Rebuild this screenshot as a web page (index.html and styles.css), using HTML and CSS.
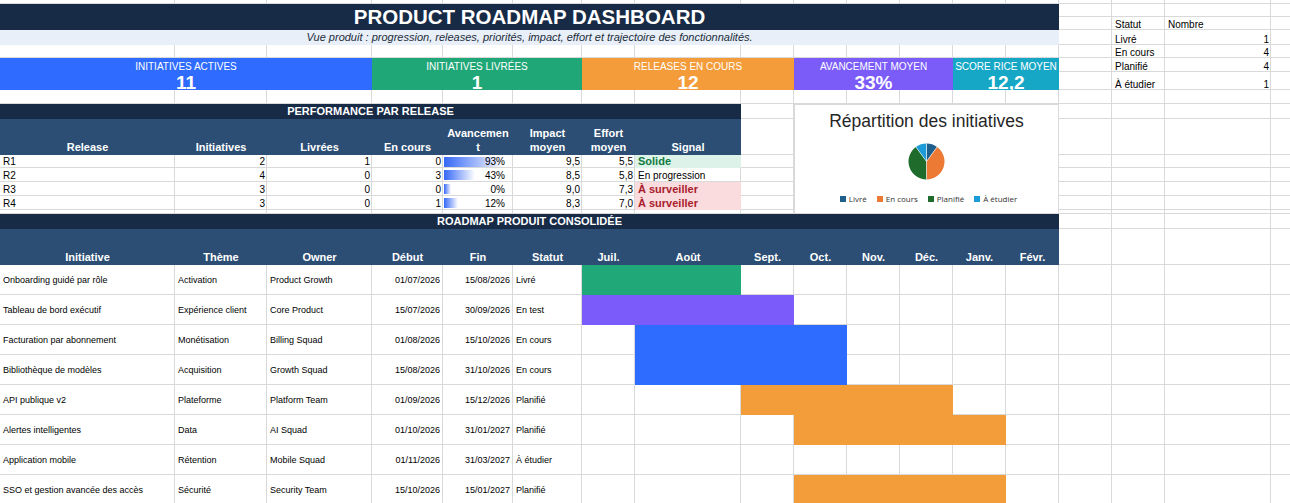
FILE: index.html
```html
<!DOCTYPE html>
<html lang="fr">
<head>
<meta charset="utf-8">
<title>Product Roadmap Dashboard</title>
<link rel="stylesheet" href="styles.css">
</head>
<body>
<main class="sheet">
  <h1 class="title">PRODUCT ROADMAP DASHBOARD</h1>
  <p class="subtitle">Vue produit : progression, releases, priorités, impact, effort et trajectoire des fonctionnalités.</p>

  <section class="kpis">
    <div class="kpi kpi-blue"><span class="kpi-label">INITIATIVES ACTIVES</span><span class="kpi-value">11</span></div>
    <div class="kpi kpi-green"><span class="kpi-label">INITIATIVES LIVRÉES</span><span class="kpi-value">1</span></div>
    <div class="kpi kpi-orange"><span class="kpi-label">RELEASES EN COURS</span><span class="kpi-value">12</span></div>
    <div class="kpi kpi-purple"><span class="kpi-label">AVANCEMENT MOYEN</span><span class="kpi-value">33%</span></div>
    <div class="kpi kpi-teal"><span class="kpi-label">SCORE RICE MOYEN</span><span class="kpi-value">12,2</span></div>
  </section>

  <section class="stats">
    <div class="cell">Statut</div><div class="cell">Nombre</div>
    <div class="cell">Livré</div><div class="cell num">1</div>
    <div class="cell">En cours</div><div class="cell num">4</div>
    <div class="cell">Planifié</div><div class="cell num">4</div>
    <div class="cell">À étudier</div><div class="cell num">1</div>
  </section>

  <section class="perf">
    <div class="band">PERFORMANCE PAR RELEASE</div>
    <div class="head">Release</div>
    <div class="head">Initiatives</div>
    <div class="head">Livrées</div>
    <div class="head">En cours</div>
    <div class="head">Avancemen<br>t</div>
    <div class="head">Impact<br>moyen</div>
    <div class="head">Effort<br>moyen</div>
    <div class="head">Signal</div>

    <div class="cell">R1</div><div class="cell num">2</div><div class="cell num">1</div><div class="cell num">0</div>
    <div class="progress"><span class="databar" style="width:60px"></span><span class="pct">93%</span></div>
    <div class="cell num">9,5</div><div class="cell num">5,5</div>
    <div class="cell signal sig-good">Solide</div>

    <div class="cell">R2</div><div class="cell num">4</div><div class="cell num">0</div><div class="cell num">3</div>
    <div class="progress"><span class="databar" style="width:31px"></span><span class="pct">43%</span></div>
    <div class="cell num">8,5</div><div class="cell num">5,8</div>
    <div class="cell signal">En progression</div>

    <div class="cell">R3</div><div class="cell num">3</div><div class="cell num">0</div><div class="cell num">0</div>
    <div class="progress"><span class="databar" style="width:7px"></span><span class="pct">0%</span></div>
    <div class="cell num">9,0</div><div class="cell num">7,3</div>
    <div class="cell signal sig-bad">À surveiller</div>

    <div class="cell">R4</div><div class="cell num">3</div><div class="cell num">0</div><div class="cell num">1</div>
    <div class="progress"><span class="databar" style="width:14px"></span><span class="pct">12%</span></div>
    <div class="cell num">8,3</div><div class="cell num">7,0</div>
    <div class="cell signal sig-bad">À surveiller</div>
  </section>

  <figure class="chart">
    <figcaption class="chart-title">Répartition des initiatives</figcaption>
    <svg class="pie" width="37" height="37" viewBox="0 0 37 37">
      <path d="M18.5 18.5 L18.5 0.5 A18 18 0 0 1 29.08 3.94 Z" fill="#1f5f8c"/>
      <path d="M18.5 18.5 L29.08 3.94 A18 18 0 0 1 18.5 36.5 Z" fill="#ec7a34"/>
      <path d="M18.5 18.5 L18.5 36.5 A18 18 0 0 1 7.92 3.94 Z" fill="#1e6b2c"/>
      <path d="M18.5 18.5 L7.92 3.94 A18 18 0 0 1 18.5 0.5 Z" fill="#1b9bd7"/>
      <g stroke="#fff" stroke-width="0.6" fill="none">
        <path d="M18.5 18.5 L18.5 0.5 M18.5 18.5 L29.08 3.94 M18.5 18.5 L18.5 36.5 M18.5 18.5 L7.92 3.94"/>
      </g>
    </svg>
    <ul class="legend">
      <li><span class="swatch sw-livre"></span>Livré</li>
      <li><span class="swatch sw-cours"></span>En cours</li>
      <li><span class="swatch sw-plan"></span>Planifié</li>
      <li><span class="swatch sw-etude"></span>À étudier</li>
    </ul>
  </figure>

  <section class="roadmap">
    <div class="band">ROADMAP PRODUIT CONSOLIDÉE</div>
    <div class="head">Initiative</div>
    <div class="head">Thème</div>
    <div class="head">Owner</div>
    <div class="head">Début</div>
    <div class="head">Fin</div>
    <div class="head">Statut</div>
    <div class="head">Juil.</div>
    <div class="head">Août</div>
    <div class="head">Sept.</div>
    <div class="head">Oct.</div>
    <div class="head">Nov.</div>
    <div class="head">Déc.</div>
    <div class="head">Janv.</div>
    <div class="head">Févr.</div>

    <div class="task">Onboarding guidé par rôle</div><div class="task">Activation</div><div class="task">Product Growth</div>
    <div class="task date">01/07/2026</div><div class="task date">15/08/2026</div><div class="task">Livré</div>
    <div class="bar bar-green span-2"></div><div></div><div></div><div></div><div></div><div></div><div></div>

    <div class="task">Tableau de bord exécutif</div><div class="task">Expérience client</div><div class="task">Core Product</div>
    <div class="task date">15/07/2026</div><div class="task date">30/09/2026</div><div class="task">En test</div>
    <div class="bar bar-purple span-3"></div><div></div><div></div><div></div><div></div><div></div>

    <div class="task">Facturation par abonnement</div><div class="task">Monétisation</div><div class="task">Billing Squad</div>
    <div class="task date">01/08/2026</div><div class="task date">15/10/2026</div><div class="task">En cours</div>
    <div></div><div class="bar bar-blue span-3"></div><div></div><div></div><div></div><div></div>

    <div class="task">Bibliothèque de modèles</div><div class="task">Acquisition</div><div class="task">Growth Squad</div>
    <div class="task date">15/08/2026</div><div class="task date">31/10/2026</div><div class="task">En cours</div>
    <div></div><div class="bar bar-blue span-3"></div><div></div><div></div><div></div><div></div>

    <div class="task">API publique v2</div><div class="task">Plateforme</div><div class="task">Platform Team</div>
    <div class="task date">01/09/2026</div><div class="task date">15/12/2026</div><div class="task">Planifié</div>
    <div></div><div></div><div class="bar bar-orange span-4"></div><div></div><div></div>

    <div class="task">Alertes intelligentes</div><div class="task">Data</div><div class="task">AI Squad</div>
    <div class="task date">01/10/2026</div><div class="task date">31/01/2027</div><div class="task">Planifié</div>
    <div></div><div></div><div></div><div class="bar bar-orange span-4"></div><div></div>

    <div class="task">Application mobile</div><div class="task">Rétention</div><div class="task">Mobile Squad</div>
    <div class="task date">01/11/2026</div><div class="task date">31/03/2027</div><div class="task">À étudier</div>
    <div></div><div></div><div></div><div></div><div></div><div></div><div></div><div></div>

    <div class="task">SSO et gestion avancée des accès</div><div class="task">Sécurité</div><div class="task">Security Team</div>
    <div class="task date">15/10/2026</div><div class="task date">15/01/2027</div><div class="task">Planifié</div>
    <div></div><div></div><div></div><div class="bar bar-orange span-4"></div><div></div>
  </section>
</main>
</body>
</html>
```

FILE: styles.css
```css
* {
  box-sizing: border-box;
  margin: 0;
  padding: 0;
}

html,
body {
  width: 1290px;
  height: 503px;
  overflow: hidden;
  background: #ffffff;
}

body {
  font-family: "Liberation Sans", Arial, sans-serif;
  color: #000000;
}

/* ---------- Spreadsheet canvas with gridlines ---------- */
.sheet {
  display: grid;
  width: 1290px;
  grid-template-columns: 175px 92px 105px 71px 70px 69px 53px 106px 53px 53px 53px 53px 53px 53px 53px 53px 106px 19px;
  grid-template-rows: 4px 13px 13px 15px 13px 14px 18px 14px 15px 36px 13px 14px 14px 14px 4px 15px 36px repeat(8, 30px);
  background-image:
    linear-gradient(to right,
      transparent 0 174px, #d9d9d9 174px 175px,
      transparent 175px 266px, #d9d9d9 266px 267px,
      transparent 267px 371px, #d9d9d9 371px 372px,
      transparent 372px 442px, #d9d9d9 442px 443px,
      transparent 443px 512px, #d9d9d9 512px 513px,
      transparent 513px 581px, #d9d9d9 581px 582px,
      transparent 582px 634px, #d9d9d9 634px 635px,
      transparent 635px 740px, #d9d9d9 740px 741px,
      transparent 741px 793px, #d9d9d9 793px 794px,
      transparent 794px 846px, #d9d9d9 846px 847px,
      transparent 847px 899px, #d9d9d9 899px 900px,
      transparent 900px 952px, #d9d9d9 952px 953px,
      transparent 953px 1005px, #d9d9d9 1005px 1006px,
      transparent 1006px 1058px, #d9d9d9 1058px 1059px,
      transparent 1059px 1111px, #d9d9d9 1111px 1112px,
      transparent 1112px 1164px, #d9d9d9 1164px 1165px,
      transparent 1165px 1270px, #d9d9d9 1270px 1271px,
      transparent 1271px),
    linear-gradient(to bottom,
      transparent 0 3px, #d9d9d9 3px 4px,
      transparent 4px 16px, #d9d9d9 16px 17px,
      transparent 17px 29px, #d9d9d9 29px 30px,
      transparent 30px 44px, #d9d9d9 44px 45px,
      transparent 45px 57px, #d9d9d9 57px 58px,
      transparent 58px 71px, #d9d9d9 71px 72px,
      transparent 72px 89px, #d9d9d9 89px 90px,
      transparent 90px 103px, #d9d9d9 103px 104px,
      transparent 104px 118px, #d9d9d9 118px 119px,
      transparent 119px 154px, #d9d9d9 154px 155px,
      transparent 155px 167px, #d9d9d9 167px 168px,
      transparent 168px 181px, #d9d9d9 181px 182px,
      transparent 182px 195px, #d9d9d9 195px 196px,
      transparent 196px 209px, #d9d9d9 209px 210px,
      transparent 210px 213px, #d9d9d9 213px 214px,
      transparent 214px 228px, #d9d9d9 228px 229px,
      transparent 229px 264px, #d9d9d9 264px 265px,
      transparent 265px 294px, #d9d9d9 294px 295px,
      transparent 295px 324px, #d9d9d9 324px 325px,
      transparent 325px 354px, #d9d9d9 354px 355px,
      transparent 355px 384px, #d9d9d9 384px 385px,
      transparent 385px 414px, #d9d9d9 414px 415px,
      transparent 415px 444px, #d9d9d9 444px 445px,
      transparent 445px 474px, #d9d9d9 474px 475px,
      transparent 475px 504px, #d9d9d9 504px 505px,
      transparent 505px);
}

/* ---------- Title ---------- */
.title {
  grid-column: 1 / 15;
  grid-row: 2 / 4;
  background: #172a46;
  color: #ffffff;
  font-size: 20.5px;
  font-weight: 700;
  line-height: 26px;
  text-align: center;
}

.subtitle {
  grid-column: 1 / 15;
  grid-row: 4;
  background: #e8eff8;
  color: #222c3a;
  font-size: 11px;
  font-style: italic;
  line-height: 15px;
  text-align: center;
  white-space: nowrap;
}

/* ---------- KPI band ---------- */
.kpis {
  grid-column: 1 / 15;
  grid-row: 6 / 8;
  display: grid;
  grid-template-columns: 372px 210px 212px 159px 106px;
}

.kpi {
  display: flex;
  flex-direction: column;
  align-items: center;
  color: #ffffff;
}

.kpi-label {
  height: 14px;
  padding-top: 2px;
  font-size: 10px;
  line-height: 14px;
}

.kpi-value {
  height: 18px;
  font-size: 19px;
  font-weight: 700;
  line-height: 21px;
}

.kpi-blue { background: #2e6bfe; }
.kpi-green { background: #20a777; }
.kpi-orange { background: #f39c39; }
.kpi-purple { background: #7b5cf9; }
.kpi-teal { background: #17a7c6; }

/* ---------- Generic cells ---------- */
.cell {
  display: flex;
  align-items: flex-end;
  padding: 0 3px;
  font-size: 10px;
  line-height: 13px;
  white-space: nowrap;
  overflow: hidden;
}

.num {
  justify-content: flex-end;
  padding-right: 2px;
}

/* ---------- Status count table ---------- */
.stats {
  grid-column: 16 / 18;
  grid-row: 3 / 8;
  display: grid;
  grid-template-columns: 53px 106px;
  grid-template-rows: 13px 15px 13px 14px 18px;
}

.stats .cell {
  line-height: 11px;
  overflow: visible;
}

/* ---------- Bands and headers ---------- */
.band {
  grid-column: 1 / -1;
  background: #172a46;
  color: #ffffff;
  font-size: 11px;
  font-weight: 700;
  line-height: 15px;
  text-align: center;
}

.head {
  display: flex;
  align-items: flex-end;
  justify-content: center;
  padding-bottom: 1px;
  background: #2c4e74;
  color: #ffffff;
  font-size: 11px;
  font-weight: 700;
  line-height: 14px;
  text-align: center;
}

/* ---------- Release performance ---------- */
.perf {
  grid-column: 1 / 9;
  grid-row: 9 / 15;
  display: grid;
  grid-template-columns: 175px 92px 105px 71px 70px 69px 53px 106px;
  grid-template-rows: 15px 36px 13px 14px 14px 14px;
}

.progress {
  display: grid;
  font-size: 10px;
  line-height: 13px;
}

.databar {
  grid-area: 1 / 1;
  align-self: center;
  height: 10px;
  margin-left: 1px;
  background: linear-gradient(to right, #3568f6 0%, #ffffff 100%);
}

.pct {
  grid-area: 1 / 1;
  align-self: end;
  justify-self: end;
  padding-right: 8px;
}

.signal {
  font-size: 10px;
}

.sig-good {
  background: #ddf2e8;
  color: #107a42;
  font-size: 11px;
  font-weight: 700;
}

.sig-bad {
  background: #fadbde;
  color: #a81d2c;
  font-size: 11px;
  font-weight: 700;
}

/* ---------- Chart ---------- */
.chart {
  grid-column: 10 / 15;
  grid-row: 9 / 16;
  display: flex;
  flex-direction: column;
  align-items: center;
  background: #ffffff;
  border: 1px solid #d9d9d9;
}

.chart-title {
  margin-top: 6px;
  color: #262626;
  font-size: 17.5px;
  line-height: 20px;
}

.pie {
  display: block;
  margin-top: 12px;
}

.legend {
  display: flex;
  gap: 10px;
  margin-top: 14px;
  margin-left: 4px;
  list-style: none;
  font-family: "Open Sans", "Noto Sans", sans-serif;
  font-size: 8px;
  line-height: 10px;
  color: #333333;
}

.legend li {
  display: flex;
  align-items: center;
  gap: 3px;
}

.swatch {
  width: 6px;
  height: 6px;
}

.sw-livre { background: #1f5f8c; }
.sw-cours { background: #ec7a34; }
.sw-plan { background: #1e6b2c; }
.sw-etude { background: #1b9bd7; }

/* ---------- Roadmap ---------- */
.roadmap {
  grid-column: 1 / 15;
  grid-row: 16 / 26;
  display: grid;
  grid-template-columns: 175px 92px 105px 71px 70px 69px 53px 106px 53px 53px 53px 53px 53px 53px;
  grid-template-rows: 15px 36px repeat(8, 30px);
}

.task {
  display: flex;
  align-items: center;
  padding: 0 3px;
  font-size: 9px;
  white-space: nowrap;
  overflow: hidden;
}

.date {
  justify-content: flex-end;
}

.bar-green { background: #20a878; }
.bar-purple { background: #7b5cfa; }
.bar-blue { background: #2e6cff; }
.bar-orange { background: #f39c3a; }

.span-2 { grid-column: span 2; }
.span-3 { grid-column: span 3; }
.span-4 { grid-column: span 4; }
```
